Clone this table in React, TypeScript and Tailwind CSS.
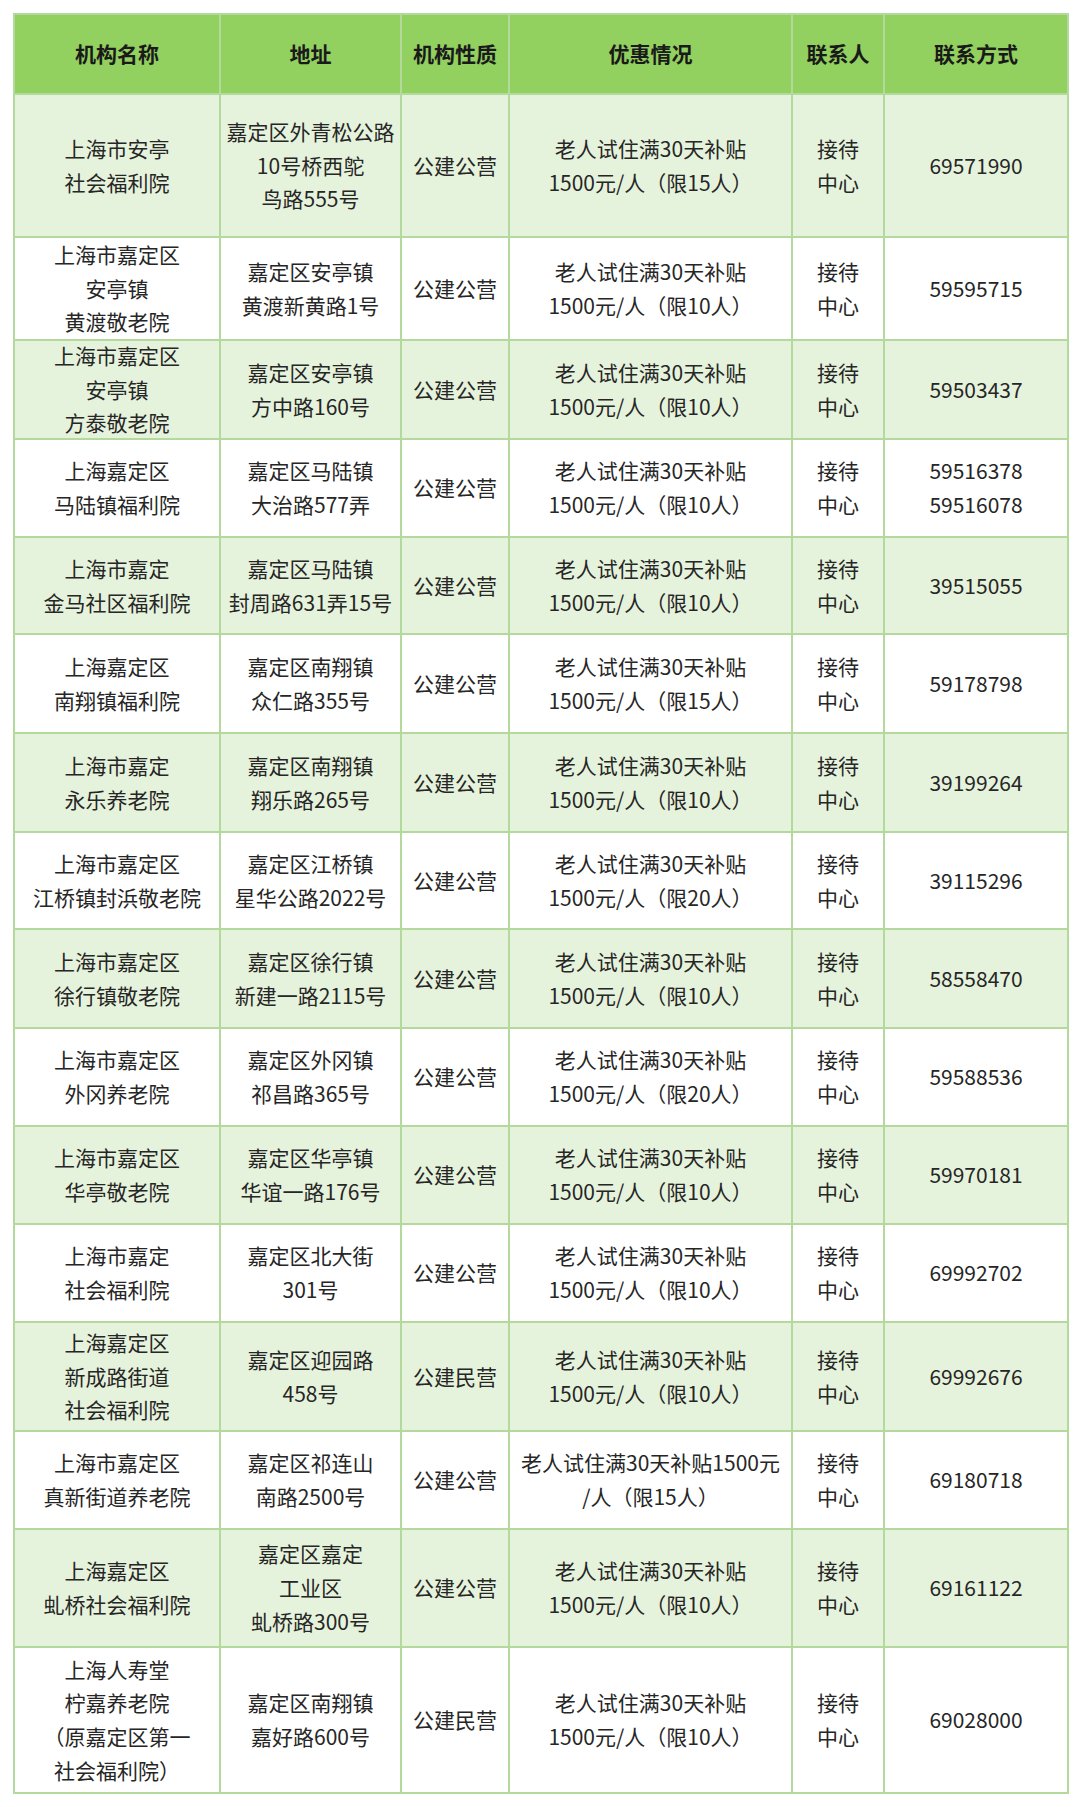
import React from "react";

type Row = {
  h: string;
  name: string[];
  addr: string[];
  kind: string;
  offer: string[];
  phone: string[];
};

const O10 = ["老人试住满30天补贴", "1500元/人（限10人）"];
const O15 = ["老人试住满30天补贴", "1500元/人（限15人）"];
const O20 = ["老人试住满30天补贴", "1500元/人（限20人）"];

const rows: Row[] = [
  { h: "h-[143px]", name: ["上海市安亭", "社会福利院"], addr: ["嘉定区外青松公路", "10号桥西鸵", "鸟路555号"], kind: "公建公营", offer: O15, phone: ["69571990"] },
  { h: "h-[103px]", name: ["上海市嘉定区", "安亭镇", "黄渡敬老院"], addr: ["嘉定区安亭镇", "黄渡新黄路1号"], kind: "公建公营", offer: O10, phone: ["59595715"] },
  { h: "h-[99px]", name: ["上海市嘉定区", "安亭镇", "方泰敬老院"], addr: ["嘉定区安亭镇", "方中路160号"], kind: "公建公营", offer: O10, phone: ["59503437"] },
  { h: "h-[98px]", name: ["上海嘉定区", "马陆镇福利院"], addr: ["嘉定区马陆镇", "大治路577弄"], kind: "公建公营", offer: O10, phone: ["59516378", "59516078"] },
  { h: "h-[97px]", name: ["上海市嘉定", "金马社区福利院"], addr: ["嘉定区马陆镇", "封周路631弄15号"], kind: "公建公营", offer: O10, phone: ["39515055"] },
  { h: "h-[99px]", name: ["上海嘉定区", "南翔镇福利院"], addr: ["嘉定区南翔镇", "众仁路355号"], kind: "公建公营", offer: O15, phone: ["59178798"] },
  { h: "h-[99px]", name: ["上海市嘉定", "永乐养老院"], addr: ["嘉定区南翔镇", "翔乐路265号"], kind: "公建公营", offer: O10, phone: ["39199264"] },
  { h: "h-[97px]", name: ["上海市嘉定区", "江桥镇封浜敬老院"], addr: ["嘉定区江桥镇", "星华公路2022号"], kind: "公建公营", offer: O20, phone: ["39115296"] },
  { h: "h-[99px]", name: ["上海市嘉定区", "徐行镇敬老院"], addr: ["嘉定区徐行镇", "新建一路2115号"], kind: "公建公营", offer: O10, phone: ["58558470"] },
  { h: "h-[98px]", name: ["上海市嘉定区", "外冈养老院"], addr: ["嘉定区外冈镇", "祁昌路365号"], kind: "公建公营", offer: O20, phone: ["59588536"] },
  { h: "h-[98px]", name: ["上海市嘉定区", "华亭敬老院"], addr: ["嘉定区华亭镇", "华谊一路176号"], kind: "公建公营", offer: O10, phone: ["59970181"] },
  { h: "h-[98px]", name: ["上海市嘉定", "社会福利院"], addr: ["嘉定区北大街", "301号"], kind: "公建公营", offer: O10, phone: ["69992702"] },
  { h: "h-[109px]", name: ["上海嘉定区", "新成路街道", "社会福利院"], addr: ["嘉定区迎园路", "458号"], kind: "公建民营", offer: O10, phone: ["69992676"] },
  { h: "h-[98px]", name: ["上海市嘉定区", "真新街道养老院"], addr: ["嘉定区祁连山", "南路2500号"], kind: "公建公营", offer: ["老人试住满30天补贴1500元", "/人（限15人）"], phone: ["69180718"] },
  { h: "h-[118px]", name: ["上海嘉定区", "虬桥社会福利院"], addr: ["嘉定区嘉定", "工业区", "虬桥路300号"], kind: "公建公营", offer: O10, phone: ["69161122"] },
  { h: "h-[146px]", name: ["上海人寿堂", "柠嘉养老院", "（原嘉定区第一", "社会福利院）"], addr: ["嘉定区南翔镇", "嘉好路600号"], kind: "公建民营", offer: O10, phone: ["69028000"] },
];

const headers = ["机构名称", "地址", "机构性质", "优惠情况", "联系人", "联系方式"];

function Lines({ lines }: { lines: string[] }) {
  return (
    <div className="-my-[6px]">
      {lines.map((l, i) => (
        <div key={i} className="whitespace-nowrap">
          {l}
        </div>
      ))}
    </div>
  );
}

const td = "border-2 border-[#b4d99c] text-center align-middle px-0 py-0";

export default function App() {
  return (
    <div
      className="bg-white min-h-[1807px] pt-[13px] pl-[13px] text-[21px] leading-[33.7px] text-[#262626]"
      style={{ fontFamily: '"Noto Sans CJK SC", "Noto Sans", sans-serif' }}
    >
      <table className="table-fixed border-collapse w-[1054px]">
        <colgroup>
          <col className="w-[206px]" />
          <col className="w-[181px]" />
          <col className="w-[108px]" />
          <col className="w-[283px]" />
          <col className="w-[92px]" />
          <col className="w-[184px]" />
        </colgroup>
        <thead>
          <tr className="h-[80px] bg-[#92d05f]">
            {headers.map((h) => (
              <th key={h} className={`${td} font-bold text-[#1a1a1a]`}>
                {h}
              </th>
            ))}
          </tr>
        </thead>
        <tbody>
          {rows.map((r, i) => (
            <tr key={i} className={`${r.h} ${i % 2 === 0 ? "bg-[#e6f3dc]" : "bg-white"}`}>
              <td className={td}>
                <Lines lines={r.name} />
              </td>
              <td className={td}>
                <Lines lines={r.addr} />
              </td>
              <td className={td}>{r.kind}</td>
              <td className={td}>
                <Lines lines={r.offer} />
              </td>
              <td className={td}>
                <Lines lines={["接待", "中心"]} />
              </td>
              <td className={td}>
                <Lines lines={r.phone} />
              </td>
            </tr>
          ))}
        </tbody>
      </table>
    </div>
  );
}
